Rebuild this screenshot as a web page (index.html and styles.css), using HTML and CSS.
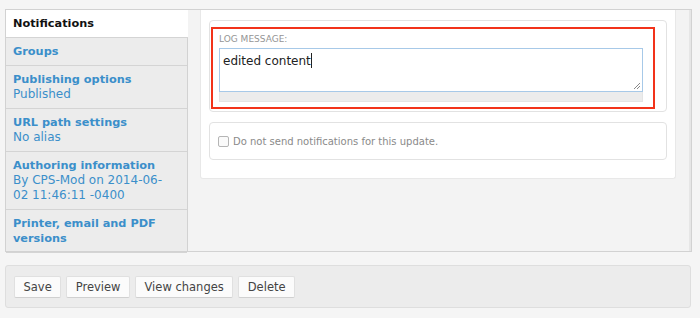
FILE: index.html
```html
<!DOCTYPE html>
<html>
<head>
<meta charset="utf-8">
<link rel="stylesheet" href="styles.css">
</head>
<body>
<div class="vtabs">
  <ul class="tablist">
    <li class="tab active"><span class="title">Notifications</span></li>
    <li class="tab"><a class="title">Groups</a></li>
    <li class="tab"><a class="title">Publishing options</a><span class="summary">Published</span></li>
    <li class="tab"><a class="title">URL path settings</a><span class="summary">No alias</span></li>
    <li class="tab"><a class="title">Authoring information</a><span class="summary">By CPS-Mod on 2014-06-<br>02 11:46:11 -0400</span></li>
    <li class="tab"><a class="title">Printer, email and PDF versions</a></li>
  </ul>
  <div class="pane">
    <div class="panel">
      <div class="fieldset log">
        <div class="highlight">
          <label class="label">LOG MESSAGE:</label>
          <div class="textarea">edited content<span class="caret"></span>
            <svg class="resize" width="8" height="8" viewBox="0 0 8 8"><path d="M7 1 L1 7 M7 4 L4 7" stroke="#888" stroke-width="1" fill="none"/></svg>
          </div>
          <div class="grippie"></div>
        </div>
      </div>
      <div class="fieldset notify">
        <span class="checkbox"></span>
        <span class="cblabel">Do not send notifications for this update.</span>
      </div>
    </div>
  </div>
</div>
<div class="actions">
  <button class="btn">Save</button>
  <button class="btn">Preview</button>
  <button class="btn">View changes</button>
  <button class="btn">Delete</button>
</div>
</body>
</html>
```
FILE: styles.css
```css
html, body {
  margin: 0;
  padding: 0;
}
body {
  background: #f5f5f5;
  font-family: "DejaVu Sans", Verdana, sans-serif;
  width: 700px;
  height: 318px;
  overflow: hidden;
}
.vtabs {
  display: flex;
  margin: 9px 8px 0 5px;
  border: 1px solid #d2d2d2;
  height: 243px;
  box-sizing: border-box;
}
.tablist {
  list-style: none;
  margin: 0;
  padding: 0;
  width: 181px;
  background: #ececec;
  border-right: 1px solid #d2d2d2;
  flex: none;
}
.tab {
  padding: 6px 14px 6px 7px;
  border-bottom: 1px solid #d4d4d4;
  line-height: 15px;
  font-size: 11.3px;
}
.tab .title {
  display: block;
  font-weight: bold;
  color: #3b8fca;
}
.tab .summary {
  display: block;
  font-size: 12px;
  color: #3b8fca;
}
.tab.active {
  background: #fff;
  margin-right: -1px;
}
.tab.active .title {
  color: #111;
}
.pane {
  flex: 1;
  background: #f3f3f3;
  padding: 0 13px 0 12px;
  border-right: 2px solid #e6e6e6;
}
.panel {
  background: #fff;
  border: 1px solid #e8e8e8;
  border-top: none;
  border-radius: 0 0 3px 3px;
  padding: 10px 8px 18px 8px;
}
.fieldset {
  border: 1px solid #e2e2e2;
  border-radius: 4px;
  background: #fff;
}
.log {
  padding: 6px 11px 2px 1px;
}
.highlight {
  border: 2px solid #f2331a;
  padding: 4px 10px 5px 6px;
}
.label {
  display: block;
  font-size: 9px;
  line-height: 12px;
  color: #959595;
  margin-bottom: 3px;
}
.textarea {
  position: relative;
  border: 1px solid #a7c9e8;
  padding: 3px 3px;
  font-size: 12px;
  line-height: 18px;
  color: #222;
  box-sizing: border-box;
  height: 44px;
}
.caret {
  display: inline-block;
  width: 1px;
  height: 15px;
  background: #222;
  vertical-align: -3px;
}
.resize {
  position: absolute;
  right: 1px;
  bottom: 1px;
}
.grippie {
  height: 9px;
  background: #ececec;
  border: 1px solid #e4e4e4;
  border-top: none;
}
.notify {
  margin-top: 10px;
  height: 38px;
  box-sizing: border-box;
  display: flex;
  align-items: center;
  padding: 0 0 0 8px;
}
.checkbox {
  width: 9px;
  height: 9px;
  border: 1px solid #b5b5b5;
  border-radius: 2px;
  background: #fafafa;
  margin-right: 4px;
}
.cblabel {
  font-size: 10px;
  color: #8a8a8a;
}
.actions {
  margin: 13px 9px 0 5px;
  height: 43px;
  box-sizing: border-box;
  background: #ececec;
  border: 1px solid #dedede;
  border-radius: 3px;
  display: flex;
  align-items: center;
  gap: 5px;
  padding: 0 8px;
}
.btn {
  height: 22px;
  padding: 0 8.5px;
  background: #fbfbfb;
  border: 1px solid #e0e0e0;
  border-bottom-color: #d0d0d0;
  border-radius: 2px;
  font-family: "DejaVu Sans", Verdana, sans-serif;
  font-size: 11.5px;
  color: #444;
}
```
